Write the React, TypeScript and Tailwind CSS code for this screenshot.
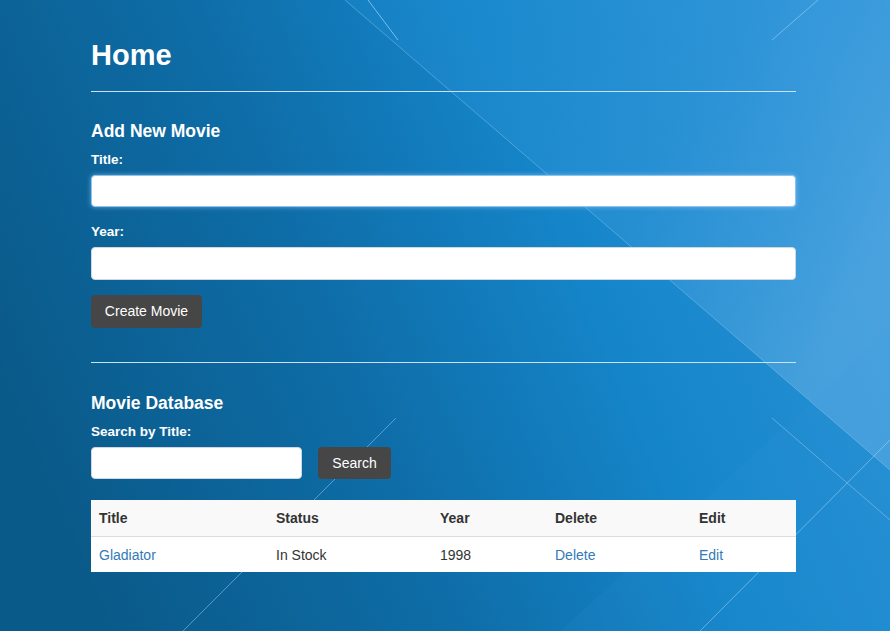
import React from "react";

const font = "font-['Liberation_Sans',Arial,Helvetica,sans-serif]";

function Background() {
  return (
    <svg
      className="absolute inset-0 h-full w-full"
      viewBox="0 0 890 631"
      preserveAspectRatio="none"
    >
      <defs>
        <linearGradient id="bg" x1="0" y1="0.6" x2="1" y2="0.3">
          <stop offset="0" stopColor="#0a5a89" />
          <stop offset="0.35" stopColor="#0e6ca6" />
          <stop offset="0.65" stopColor="#1585c9" />
          <stop offset="1" stopColor="#2b93d8" />
        </linearGradient>
        <linearGradient id="hl" x1="0" y1="0" x2="1" y2="0.5">
          <stop offset="0" stopColor="#1a8bd2" stopOpacity="0.35" />
          <stop offset="0.6" stopColor="#3a9bdc" stopOpacity="0.35" />
          <stop offset="1" stopColor="#6ab3e6" stopOpacity="0.5" />
        </linearGradient>
      </defs>
      <rect x="0" y="0" width="890" height="631" fill="url(#bg)" />
      <polygon points="345,0 890,0 890,470" fill="url(#hl)" />
      <polygon points="560,631 890,330 890,631" fill="#3a9ee0" fillOpacity="0.1" />
      <line x1="368" y1="0" x2="398" y2="40" stroke="#8fd0f5" strokeOpacity="0.8" strokeWidth="1" />
      <line x1="345" y1="0" x2="890" y2="470" stroke="#9fd2f2" strokeOpacity="0.4" strokeWidth="1" />
      <line x1="772" y1="418" x2="890" y2="520" stroke="#b8def5" strokeOpacity="0.4" strokeWidth="1" />
      <line x1="818" y1="0" x2="772" y2="40" stroke="#b8def5" strokeOpacity="0.5" strokeWidth="1" />
      <line x1="396" y1="418" x2="183" y2="631" stroke="#8fcaf0" strokeOpacity="0.55" strokeWidth="1" />
      <line x1="890" y1="440" x2="700" y2="631" stroke="#b8def5" strokeOpacity="0.5" strokeWidth="1" />
    </svg>
  );
}

function Label({ children }: { children: React.ReactNode }) {
  return (
    <div className="text-[13.5px] font-bold leading-[20px] text-white">{children}</div>
  );
}

export default function App() {
  return (
    <div className={`relative h-[631px] w-[890px] overflow-hidden ${font}`}>
      <Background />
      <div className="relative ml-[91px] w-[705px] pt-[39px]">
        <h1 className="text-[29px] font-bold leading-[33px] text-white">Home</h1>
        <div className="mt-[19px] border-t border-[#c9e3f4]" />

        <h3 className="mt-[29px] text-[17.5px] font-bold leading-[20px] text-white">Add New Movie</h3>
        <div className="mt-[9px]">
          <Label>Title:</Label>
        </div>
        <div className="mt-[5px] h-[32px] rounded-[4px] border border-[#8fc3ea] bg-white shadow-[0_0_5px_rgba(140,200,245,0.7)]" />
        <div className="mt-[15px]">
          <Label>Year:</Label>
        </div>
        <div className="mt-[5px] h-[33px] rounded-[4px] border border-[#cfd8de] bg-white" />
        <button className="mt-[15px] flex h-[33px] w-[111px] items-center justify-center rounded-[4px] bg-[#464646] text-[14px] text-white">
          Create Movie
        </button>

        <div className="mt-[34px] border-t border-[#c9e3f4]" />

        <h3 className="mt-[30px] text-[17.5px] font-bold leading-[20px] text-white">Movie Database</h3>
        <div className="mt-[9px]">
          <Label>Search by Title:</Label>
        </div>
        <div className="mt-[5px] flex items-center gap-[16px]">
          <div className="h-[32px] w-[211px] rounded-[4px] border border-[#cfd8de] bg-white" />
          <button className="flex h-[32px] w-[73px] items-center justify-center rounded-[4px] bg-[#464646] text-[14px] text-white">
            Search
          </button>
        </div>

        <table className="mt-[21px] w-[705px] table-fixed border-collapse bg-white text-[14px] leading-[20px] text-[#333]">
          <colgroup>
            <col className="w-[177px]" />
            <col className="w-[164px]" />
            <col className="w-[115px]" />
            <col className="w-[144px]" />
            <col className="w-[105px]" />
          </colgroup>
          <thead>
            <tr className="bg-[#f9f9f9]">
              <th className="border-b border-[#dddddd] p-[8px] text-left font-bold">Title</th>
              <th className="border-b border-[#dddddd] p-[8px] text-left font-bold">Status</th>
              <th className="border-b border-[#dddddd] p-[8px] text-left font-bold">Year</th>
              <th className="border-b border-[#dddddd] p-[8px] text-left font-bold">Delete</th>
              <th className="border-b border-[#dddddd] p-[8px] text-left font-bold">Edit</th>
            </tr>
          </thead>
          <tbody>
            <tr>
              <td className="p-[8px] pb-[7px] text-[#337ab7]">Gladiator</td>
              <td className="p-[8px] pb-[7px]">In Stock</td>
              <td className="p-[8px] pb-[7px]">1998</td>
              <td className="p-[8px] pb-[7px] text-[#337ab7]">Delete</td>
              <td className="p-[8px] pb-[7px] text-[#337ab7]">Edit</td>
            </tr>
          </tbody>
        </table>
      </div>
    </div>
  );
}
